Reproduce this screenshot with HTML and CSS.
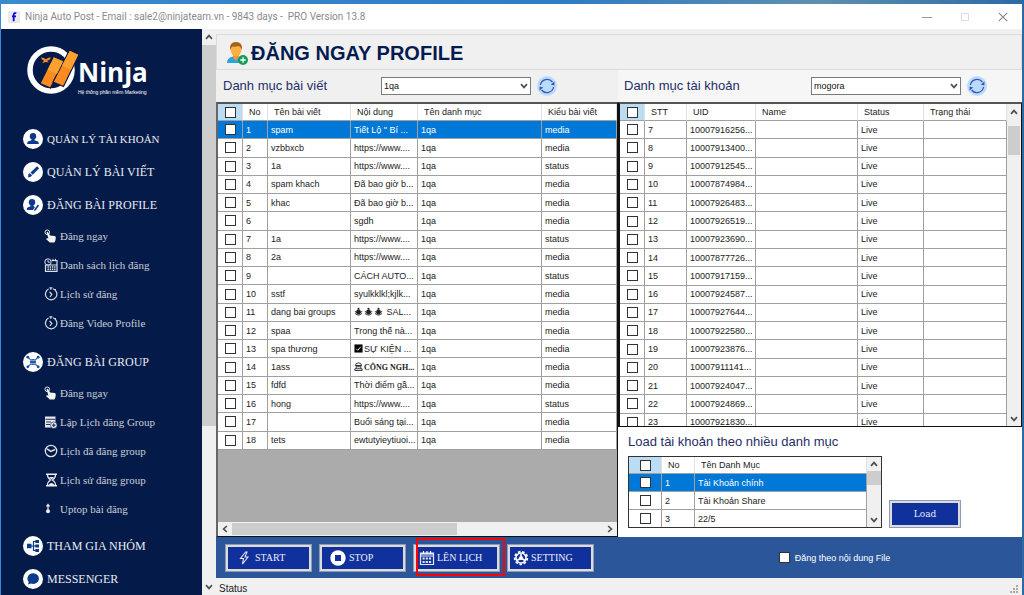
FILE: index.html
```html
<!DOCTYPE html>
<html lang="vi">
<head>
<meta charset="utf-8">
<title>Ninja Auto Post</title>
<link rel="stylesheet" href="styles.css">
</head>
<body>
<svg class="sprite" aria-hidden="true">
  <symbol id="up" viewBox="0 0 8 6"><path d="M1 4.8 4 1.6 7 4.8" fill="none" stroke="#505050" stroke-width="1.7"/></symbol>
  <symbol id="down" viewBox="0 0 8 6"><path d="M1 1.2 4 4.4 7 1.2" fill="none" stroke="#505050" stroke-width="1.7"/></symbol>
  <symbol id="left" viewBox="0 0 6 8"><path d="M4.8 1 1.6 4 4.8 7" fill="none" stroke="#505050" stroke-width="1.7"/></symbol>
  <symbol id="right" viewBox="0 0 6 8"><path d="M1.2 1 4.4 4 1.2 7" fill="none" stroke="#505050" stroke-width="1.7"/></symbol>
  <symbol id="refresh" viewBox="0 0 20 20"><circle cx="10" cy="10" r="10" fill="#b9dcfb"/><path d="M3.400 9A6.800 6.800 0 0 1 15.400 6M16.600 11A6.800 6.800 0 0 1 4.600 14" fill="none" stroke="#3f51b5" stroke-width="1.300"/><path d="M17.400 5.600v4l-3.600-1.200zM2.600 14.400v-4l3.600 1.200z" fill="#3f51b5"/></symbol>
  <symbol id="hand" viewBox="0 0 14 14"><circle cx="3.300" cy="3.300" r="2.300" fill="none" stroke="#e8e8ea" stroke-width="1"/><path d="M2.600 3.200q1-.9 1.700.2L6 6.400l4.600.7q1.200.3 1.200 1.600l-.4 2.800-1 2H5.800L2 9.900q.6-1.200 2.400-.3z" fill="#f2f2f2"/></symbol>
  <symbol id="timer" viewBox="0 0 14 14"><path d="M4.600 2A5.700 5.700 0 1 0 9 1.700M6.800.6v2.200M5.400.9h3M5.600 5l2.200 2.400-1.800 2.600" fill="none" stroke="#d8dbe2" stroke-width="1.200"/><path d="M11 2l1 1" stroke="#d8dbe2"/></symbol>
  <symbol id="bug" viewBox="0 0 10 10"><circle cx="5" cy="5.500" r="2.700" fill="#222"/><circle cx="5" cy="1.900" r="1.200" fill="#222"/><path d="M1 4.500q4 6 8 0M1 7q4 4 8 0" fill="none" stroke="#222"/></symbol>
</svg>
<div class="desktop">
<div class="window">
  <header class="titlebar">
    <svg class="appicon" viewBox="0 0 12 12"><rect width="12" height="12" rx="1" fill="#e9e9ee"/><path d="M8.300 2.200Q5.700 1.600 5.700 4v6.300M4 5.400h4" fill="none" stroke="#1707e0" stroke-width="1.800"/></svg>
    <span class="title">Ninja Auto Post - Email : sale2@ninjateam.vn - 9843 days -&nbsp; PRO Version 13.8</span>
    <button class="winbtn" aria-label="Minimize"><svg viewBox="0 0 10 10"><path d="M0 5.500h10" stroke="#999"/></svg></button>
    <button class="winbtn" aria-label="Maximize"><svg viewBox="0 0 10 10"><path d="M1.500 1.500h7v7h-7z" fill="none" stroke="#ddd"/></svg></button>
    <button class="winbtn" aria-label="Close"><svg viewBox="0 0 10 10"><path d="M.8.8l8.400 8.400M9.200.8.8 9.200" stroke="#8a8a8a" stroke-width="1.200"/></svg></button>
  </header>
  <div class="body">
    <nav class="sidebar">
      <div class="logo">
        <svg class="mark" viewBox="0 0 54 50"><circle cx="25" cy="25" r="21" fill="none" stroke="#fff" stroke-width="5.500"/><g stroke="#041b49" stroke-width="1.200"><path d="M27.500 11.500 38 16 24.500 43 14 38.500z" fill="#ff8a1f"/><path d="M43.500 5 53 9.500 37.500 41.500 27 37z" fill="#ff8a1f"/></g><path d="M27.800 12.400 37.100 16.400 31 29l-9.500-4zM43.800 5.900 52.100 9.800 45 24.500l-9-4z" fill="#ffa12e"/><path d="M15 12.500q3 0 5 1.700 2-2.200 5-1.700-1 3-4 3.300l2 1.700-3.500-.6-3.500 1.300 2-2.500q-2.500-1-3-3.200z" fill="#ff8a1f"/></svg>
        <div class="brand"><b>Ninja</b><small>Hệ thống phần mềm Marketing</small></div>
      </div>
      <a class="main tight" href="#"><svg viewBox="0 0 20 20"><circle cx="10" cy="10" r="10" fill="#fff"/><circle cx="10" cy="7.300" r="3.200" fill="#0c3a8c"/><path d="M8.500 9h3v2.300l3.500 1.200q.8.400.8 2.500H4.200q0-2.100.8-2.500l3.500-1.200z" fill="#0c3a8c"/></svg>QUẢN LÝ TÀI KHOẢN</a>
      <a class="main" href="#"><svg viewBox="0 0 20 20"><circle cx="10" cy="10" r="10" fill="#fff"/><path d="M14 4.200l2.200 2.100-6.500 6.400-2.200-2.200zM6.800 11.200 9 13.300q-.8 2-4.500 2 1.200-1 .8-2.500.2-1.300 1.500-1.600z" fill="#0c3a8c"/></svg>QUẢN LÝ BÀI VIẾT</a>
      <a class="main" href="#"><svg viewBox="0 0 20 20"><circle cx="10" cy="10" r="10" fill="#fff"/><circle cx="9" cy="7.300" r="3.200" fill="#0c3a8c"/><path d="M7.500 9h3v2.300l1.500.8-2 3H3.800q0-2.200.8-2.600l2.900-1.200zM14.800 9.600l1.300.9-3.300 4.800-1.700.7.300-1.700z" fill="#0c3a8c"/></svg>ĐĂNG BÀI PROFILE</a>
      <a class="sub" href="#"><svg><use href="#hand"/></svg>Đăng ngay</a>
      <a class="sub" href="#"><svg viewBox="0 0 14 14"><path d="M7.500 2.500H13v10.800H1.500V7M1.500 7H13" fill="none" stroke="#dcdfe6" stroke-width="1.200"/><circle cx="4" cy="4" r="3.200" fill="none" stroke="#dcdfe6"/><path d="M4 2.200v2h1.800M9 .8v2.500M11.500.8v2.500" fill="none" stroke="#dcdfe6"/><path d="M3.500 9h8M3.500 11.300h8" stroke="#dcdfe6" stroke-width="1.400" stroke-dasharray="1.400 .8"/></svg>Danh sách lịch đăng</a>
      <a class="sub" href="#"><svg><use href="#timer"/></svg>Lịch sử đăng</a>
      <a class="sub" href="#"><svg><use href="#timer"/></svg>Đăng Video Profile</a>
      <a class="main section" href="#"><svg viewBox="0 0 20 20"><circle cx="10" cy="10" r="10" fill="#fff"/><path d="M4.500 5l11 10M15.500 5l-11 10" stroke="#3e6cb2" stroke-width="1.100"/><circle cx="10" cy="10" r="3" fill="#2458a8"/><path d="M7 8.500h6M7 11.500h6" stroke="#a9c2e5" stroke-width=".7"/><g fill="#174a9c"><circle cx="4.800" cy="5.200" r="1.400"/><circle cx="15.200" cy="5.200" r="1.400"/><circle cx="4.800" cy="14.800" r="1.400"/><circle cx="15.200" cy="14.800" r="1.400"/></g></svg>ĐĂNG BÀI GROUP</a>
      <a class="sub" href="#"><svg><use href="#hand"/></svg>Đăng ngay</a>
      <a class="sub" href="#"><svg viewBox="0 0 14 14"><path d="M1 1.500h10.500V8H7v4.500H1z" fill="#e6e8ee"/><path d="M1.500 4.300h10M2 7h5M2 9.500h4" stroke="#041b49" stroke-width=".9"/><circle cx="9.800" cy="10.200" r="3.300" fill="#e6e8ee" stroke="#041b49" stroke-width=".6"/><path d="M9.800 8.500v3.400M8.100 10.200h3.400" stroke="#041b49"/></svg>Lập Lịch đăng Group</a>
      <a class="sub" href="#"><svg viewBox="0 0 14 14"><circle cx="7" cy="7" r="5.700" fill="none" stroke="#dfe1e8" stroke-width="1.300"/><path d="M3 4.800 6.800 7.400 11 5.500" fill="none" stroke="#dfe1e8" stroke-width="1.500"/></svg>Lịch đã đăng group</a>
      <a class="sub" href="#"><svg viewBox="0 0 14 14"><path d="M2 1.200h11M2 12.800h11" stroke="#eee" stroke-width="1.600"/><path d="M3.500 2q0 3 3 5-3 2-3 5M11.500 2q0 3-3 5 3 2 3 5" fill="none" stroke="#eee" stroke-width="1.200"/><path d="M5 4h5L7.500 6.500zM4.500 12q3-4 6 0z" fill="#eee"/></svg>Lịch sử đăng group</a>
      <a class="sub" href="#"><svg viewBox="0 0 14 14"><path d="M4 1.500l2.300 3H1.700zM3.400 4h1.200v4H3.400z" fill="#eee"/><circle cx="4" cy="9.200" r="2" fill="#eee"/></svg>Uptop bài đăng</a>
      <a class="main after" href="#"><svg viewBox="0 0 20 20"><circle cx="10" cy="10" r="10" fill="#fff"/><path d="M6 10h4.500M14 5.500h-3.500v9H14M10.500 10H14" fill="none" stroke="#0c3a8c" stroke-width="1.200"/><path d="M4 7.800h4.500v4.400H4zM12.300 3.900H16v3h-3.700zM12.300 8.500H16v3h-3.700zM12.300 13.100H16v3h-3.700z" fill="#0c3a8c"/></svg>THAM GIA NHÓM</a>
      <a class="main" href="#"><svg viewBox="0 0 20 20"><circle cx="10" cy="10" r="10" fill="#fff"/><path d="M10.200 4.300a5.800 5.300 0 1 1-2.200 10.200l-3 1 .7-2.600a5.600 5.300 0 0 1 4.500-8.600z" fill="#0c3a8c"/></svg>MESSENGER</a>
    </nav>
    <div class="vscroll side"><svg><use href="#up"/></svg><i class="thumb"></i><i class="rest"></i><svg><use href="#down"/></svg></div>
    <main class="content">
      <div class="heading">
        <svg viewBox="0 0 22 24"><path d="M1 22q0-5.500 6-6.500h6q6 1 6 6.500z" fill="#2ba3e0"/><path d="M7 14h6v3l-3 2.500L7 17z" fill="#e9963e"/><ellipse cx="10" cy="9" rx="5.300" ry="6.500" fill="#fbb040"/><path d="M4.300 9Q3 1 10 1t5.700 8q-1-3.500-3-4-4 1-6.500.500-1.200 1-1.900 3.500z" fill="#a4601f"/><circle cx="17" cy="19" r="5" fill="#169d58"/><path d="M17 16.300v5.400M14.300 19h5.400" stroke="#fff" stroke-width="1.300"/></svg>
        <h1>ĐĂNG NGAY PROFILE</h1>
      </div>
      <div class="panes">
        <section class="pane posts">
          <div class="filter">
            <label for="cat">Danh mục bài viết</label>
            <span class="combo"><select id="cat"><option>1qa</option></select><svg><use href="#down"/></svg></span>
            <button class="refresh" aria-label="Tải lại bài viết"><svg><use href="#refresh"/></svg></button>
          </div>
          <div class="grid">
            <div class="gridbody">
              <table class="list">
                <colgroup><col class="c25"><col class="c25"><col class="c83"><col class="c67"><col class="c124"><col></colgroup>
                <thead><tr><th class="sel"><input type="checkbox" aria-label="Chọn tất cả"><th>No<th>Tên bài viết<th>Nội dung<th>Tên danh mục<th>Kiểu bài viết</thead>
                <tbody>
                <tr class="active"><td><input type="checkbox" aria-label="1"><td>1<td>spam<td>Tiết Lộ " Bí ...<td>1qa<td>media
                <tr><td><input type="checkbox" aria-label="2"><td>2<td>vzbbxcb<td>https://www....<td>1qa<td>media
                <tr><td><input type="checkbox" aria-label="3"><td>3<td>1a<td>https://www....<td>1qa<td>status
                <tr><td><input type="checkbox" aria-label="4"><td>4<td>spam khach<td>Đã bao giờ b...<td>1qa<td>media
                <tr><td><input type="checkbox" aria-label="5"><td>5<td>khac<td>Đã bao giờ b...<td>1qa<td>media
                <tr><td><input type="checkbox" aria-label="6"><td>6<td><td>sgdh<td>1qa<td>media
                <tr><td><input type="checkbox" aria-label="7"><td>7<td>1a<td>https://www....<td>1qa<td>status
                <tr><td><input type="checkbox" aria-label="8"><td>8<td>2a<td>https://www....<td>1qa<td>media
                <tr><td><input type="checkbox" aria-label="9"><td>9<td><td>CÁCH AUTO...<td>1qa<td>status
                <tr><td><input type="checkbox" aria-label="10"><td>10<td>sstf<td>syulkklkl;kjlk...<td>1qa<td>media
                <tr><td><input type="checkbox" aria-label="11"><td>11<td>dang bai groups<td><svg class="glyph"><use href="#bug"/></svg><svg class="glyph"><use href="#bug"/></svg><svg class="glyph"><use href="#bug"/></svg> SAL...<td>1qa<td>media
                <tr><td><input type="checkbox" aria-label="12"><td>12<td>spaa<td>Trong thế nà...<td>1qa<td>media
                <tr><td><input type="checkbox" aria-label="13"><td>13<td>spa thương<td><svg class="glyph" viewBox="0 0 10 10"><path d="M.5.5h9v9h-9z" fill="#000"/><path d="M2.500 5.300l1.700 1.700L7.500 3" fill="none" stroke="#fff"/></svg>SỰ KIỆN ...<td>1qa<td>media
                <tr><td><input type="checkbox" aria-label="14"><td>14<td>1ass<td><svg class="glyph" viewBox="0 0 10 10"><path d="M1 9.500V7.500h8v2zM2.500 7V4h5v3M1.500 4q0-3 3.500-3t3.500 3z" fill="none" stroke="#222"/><path d="M3.500 5.300h3" stroke="#222"/></svg><b class="serif">CÔNG NGH...</b><td>1qa<td>media
                <tr><td><input type="checkbox" aria-label="15"><td>15<td>fdfd<td>Thời điểm gầ...<td>1qa<td>media
                <tr><td><input type="checkbox" aria-label="16"><td>16<td>hong<td>https://www....<td>1qa<td>status
                <tr><td><input type="checkbox" aria-label="17"><td>17<td><td>Buổi sáng tại...<td>1qa<td>media
                <tr><td><input type="checkbox" aria-label="18"><td>18<td>tets<td>ewtutyieytiuoi...<td>1qa<td>media
                </tbody>
              </table>
            </div>
            <div class="hscroll"><svg><use href="#left"/></svg><i class="thumb"></i><i class="rest"></i><svg><use href="#right"/></svg></div>
          </div>
        </section>
        <section class="pane accounts">
          <div class="filter light">
            <label for="acc">Danh mục tài khoản</label>
            <span class="combo"><select id="acc"><option>mogora</option></select><svg><use href="#down"/></svg></span>
            <button class="refresh" aria-label="Tải lại tài khoản"><svg><use href="#refresh"/></svg></button>
          </div>
          <div class="grid side-by">
            <div class="gridbody">
              <table class="list short">
                <colgroup><col class="c25"><col class="c42"><col class="c69"><col class="c102"><col class="c66"><col></colgroup>
                <thead><tr><th class="sel"><input type="checkbox" aria-label="Chọn tất cả tài khoản"><th>STT<th>UID<th>Name<th>Status<th>Trạng thái</thead>
                <tbody>
                <tr><td><input type="checkbox" aria-label="TK 7"><td>7<td>10007916256...<td><td>Live<td>
                <tr><td><input type="checkbox" aria-label="TK 8"><td>8<td>10007913400...<td><td>Live<td>
                <tr><td><input type="checkbox" aria-label="TK 9"><td>9<td>10007912545...<td><td>Live<td>
                <tr><td><input type="checkbox" aria-label="TK 10"><td>10<td>10007874984...<td><td>Live<td>
                <tr><td><input type="checkbox" aria-label="TK 11"><td>11<td>10007926483...<td><td>Live<td>
                <tr><td><input type="checkbox" aria-label="TK 12"><td>12<td>10007926519...<td><td>Live<td>
                <tr><td><input type="checkbox" aria-label="TK 13"><td>13<td>10007923690...<td><td>Live<td>
                <tr><td><input type="checkbox" aria-label="TK 14"><td>14<td>10007877726...<td><td>Live<td>
                <tr><td><input type="checkbox" aria-label="TK 15"><td>15<td>10007917159...<td><td>Live<td>
                <tr><td><input type="checkbox" aria-label="TK 16"><td>16<td>10007924587...<td><td>Live<td>
                <tr><td><input type="checkbox" aria-label="TK 17"><td>17<td>10007927644...<td><td>Live<td>
                <tr><td><input type="checkbox" aria-label="TK 18"><td>18<td>10007922580...<td><td>Live<td>
                <tr><td><input type="checkbox" aria-label="TK 19"><td>19<td>10007923876...<td><td>Live<td>
                <tr><td><input type="checkbox" aria-label="TK 20"><td>20<td>10007911141...<td><td>Live<td>
                <tr><td><input type="checkbox" aria-label="TK 21"><td>21<td>10007924047...<td><td>Live<td>
                <tr><td><input type="checkbox" aria-label="TK 22"><td>22<td>10007924869...<td><td>Live<td>
                <tr><td><input type="checkbox" aria-label="TK 23"><td>23<td>10007921830...<td><td>Live<td>
                </tbody>
              </table>
            </div>
            <div class="vscroll acc"><svg><use href="#up"/></svg><i class="thumb"></i><i class="rest"></i><svg><use href="#down"/></svg></div>
          </div>
          <div class="loader">
            <h2>Load tài khoản theo nhiều danh mục</h2>
            <div class="loadrow">
              <div class="mini">
                <table class="list natural">
                  <colgroup><col class="c33"><col class="c33"><col></colgroup>
                  <thead><tr><th class="sel"><input type="checkbox" aria-label="Chọn tất cả danh mục"><th>No<th>Tên Danh Mục</thead>
                  <tbody>
                  <tr class="active"><td><input type="checkbox" aria-label="DM 1"><td>1<td>Tài Khoản chính
                  <tr><td><input type="checkbox" aria-label="DM 2"><td>2<td>Tài Khoản Share
                  <tr><td><input type="checkbox" aria-label="DM 3"><td>3<td>22/5
                  </tbody>
                </table>
                <div class="vscroll cats"><svg><use href="#up"/></svg><i class="thumb"></i><i class="rest"></i><svg><use href="#down"/></svg></div>
              </div>
              <button class="action load">Load</button>
            </div>
          </div>
        </section>
      </div>
      <div class="toolbar">
        <button class="action wide"><svg viewBox="0 0 16 16"><path d="M9.500 2 4.500 8.500h3L6.500 14 12 7H9L11 2z" fill="none" stroke="#e6e8f4" stroke-width="1.100"/></svg>START</button>
        <button class="action wide"><svg viewBox="0 0 16 16"><circle cx="8" cy="8" r="7.700" fill="#fff"/><rect x="5" y="5" width="6" height="6" fill="#10309c"/></svg>STOP</button>
        <button class="action marked"><svg viewBox="0 0 16 16"><path d="M1.500 3h13v11.500h-13zM1.500 6h13" fill="none" stroke="#e6e8f4" stroke-width="1.200"/><path d="M2 3.800h12" stroke="#e6e8f4" stroke-width="1.600"/><path d="M4.500 1v3M8 1v3M11.500 1v3" stroke="#fff" stroke-width="1.200"/><path d="M3.500 8.500h9M3.500 12h9" stroke="#dfe2f2" stroke-width="2.200" stroke-dasharray="2.200 1"/></svg>LÊN LỊCH</button>
        <button class="action"><svg viewBox="0 0 16 16"><circle cx="8" cy="8" r="6.300" fill="none" stroke="#fff" stroke-width="1.800" stroke-dasharray="2.600 1.700"/><circle cx="8" cy="8" r="5" fill="none" stroke="#fff" stroke-width="1.500"/><path d="M8 4v4l-4 2.500M8 8l4 2.500" stroke="#fff" stroke-width="1.600" fill="none"/><circle cx="8" cy="8" r="2" fill="#fff"/></svg>SETTING</button>
        <label class="check"><input type="checkbox">Đăng theo nội dung File</label>
      </div>
      <footer class="status"><span>Status</span><svg viewBox="0 0 10 10" fill="#aaa"><path d="M7 1h2v2H7zM4 4h2v2H4zM7 4h2v2H7zM1 7h2v2H1zM4 7h2v2H4zM7 7h2v2H7z"/></svg></footer>
    </main>
  </div>
</div>
</div>
</body>
</html>
```
FILE: styles.css
```css
* { box-sizing: border-box; }
body { margin: 0; font-family: "Liberation Sans", Arial, sans-serif; font-size: 10px; line-height: 12px; color: #222; }
button, select, input { font: inherit; margin: 0; }
.sprite { position: absolute; width: 0; height: 0; }
.desktop { height: 100vh; padding: 4px 2px 0 1px; overflow: hidden; background: linear-gradient(90deg, #3a8ad0, #2f7cc4 55%, #5f8fae 80%, #2c6aa6); }
.window { height: 100%; display: flex; flex-direction: column; background: #f0f0f0; }

.titlebar { flex: none; height: 25px; display: flex; align-items: center; background: #fff; padding-left: 7px; }
.appicon { width: 12px; height: 12px; margin-right: 5px; }
.title { flex: 1; color: #8a8a8a; white-space: nowrap; font-family: Roboto, sans-serif; }
.winbtn { width: 38px; height: 25px; border: 0; padding: 0; background: none; display: grid; place-items: center; }
.winbtn svg { width: 10px; height: 10px; }

.body { flex: 1; min-height: 0; display: flex; }
.sidebar { flex: none; width: 201px; background: #041b49; overflow: hidden; font-family: "Liberation Serif", "Times New Roman", serif; }
.sidebar a { display: flex; align-items: center; color: #e8eaf0; text-decoration: none; white-space: nowrap; }
.logo { display: flex; height: 93px; padding: 16px 0 0 25px; }
.mark { width: 54px; height: 50px; }
.brand { display: flex; flex-direction: column; color: #fff; padding-top: 13px; margin-left: -2px; }
.brand b { font: bold 26px/28px "Open Sans", sans-serif; }
.brand small { margin-top: 2px; font: 5px/8px "Liberation Sans", sans-serif; white-space: nowrap; }
.main { height: 33px; padding-left: 22px; gap: 4px; font-size: 12px; }
.tight { font-size: 11px; }
.main svg { width: 20px; height: 20px; }
.section { margin-top: 8px; }
.after { margin-top: 6px; }
.sub { height: 29px; padding-left: 43px; gap: 2px; font-size: 11px; }
.sidebar .sub { color: #c9cdd8; }
.sub svg { width: 14px; height: 14px; }

.vscroll { flex: none; width: 14px; display: flex; flex-direction: column; align-items: center; background: #f0f0f0; }
.vscroll svg { width: 8px; height: 6px; margin: 5px 0; flex: none; }
.vscroll .thumb { width: 100%; background: #cdcdcd; }
.side .thumb { flex: 384; }
.side .rest { flex: 154; }
.acc svg { margin: 5px 0 11px; }
.acc svg:last-child { margin: 4px 0; }
.acc .thumb { flex: 29; width: 12px; }
.acc .rest { flex: 256; }
.cats svg { margin: 4px 0; }
.cats .thumb { flex: 1; }
.cats .rest { flex: 2; }
.hscroll { flex: none; height: 14px; display: flex; align-items: center; background: #f0f0f0; }
.hscroll svg { width: 6px; height: 8px; margin: 0 4px; flex: none; }
.hscroll .thumb { flex: 226; height: 12px; background: #cdcdcd; }
.hscroll .rest { flex: 146; }

.content { flex: 1; min-width: 0; display: flex; flex-direction: column; }
.heading { flex: none; height: 36px; margin-top: 5px; display: flex; align-items: center; gap: 3px; padding: 2px 0 0 9px; border: 1px solid #dcdcdc; }
.heading svg { width: 22px; height: 24px; }
h1 { margin: 0; font-size: 20px; line-height: 24px; color: #041b50; }
.panes { flex: 1; min-height: 0; display: grid; grid-template-columns: 402fr 404fr; }
.pane { min-width: 0; min-height: 0; display: flex; flex-direction: column; }
.filter { flex: none; height: 32px; display: flex; align-items: center; padding-left: 7px; }
.light { background: #f6f6f6; padding-left: 6px; }
.filter label { flex: none; width: 158px; font-size: 13px; line-height: 16px; color: #1f2f66; }
.light label { width: 187px; }
.combo { position: relative; width: 150px; height: 18px; }
.combo select { width: 100%; height: 100%; appearance: none; border: 1px solid #7a7a7a; border-radius: 0; background: #fff; padding: 0 2px; font-size: 9px; color: #111; }
.combo svg { position: absolute; right: 3px; top: 6px; width: 8px; height: 6px; pointer-events: none; }
.refresh { width: 20px; height: 20px; margin-left: 6px; padding: 0; border: 0; background: none; }
.refresh svg { width: 20px; height: 20px; display: block; }

.grid { flex: 1; min-height: 0; display: flex; flex-direction: column; border: 1px solid #222; border-width: 2px 1px 1px 2px; border-color: #555 #111 #111 #666; background: #ababab; }
.side-by { flex-direction: row; border-left-color: #111; }
.gridbody { flex: 1; min-height: 0; min-width: 0; overflow: hidden; }
.list { width: 100%; height: 346px; table-layout: fixed; border-collapse: separate; border-spacing: 0; background: #fff; font-size: 9px; line-height: 12px; }
.short { height: 328px; }
.natural { height: auto; }
.list th, .list td { padding: 0 0 0 3px; border-right: 1px solid #a0a0a0; border-bottom: 1px solid #a0a0a0; white-space: nowrap; overflow: hidden; text-align: left; font-weight: normal; }
.list th { height: 17px; padding-left: 6px; border-right-color: #e2e2e2; }
.list td { height: 18px; }
.list th:first-child, .list td:first-child { padding: 0; text-align: center; }
.list .sel { background: #bcdcf4; }
.list .active td { background: #0078d7; color: #fff; }
.c25 { width: 25px; }
.c33 { width: 33px; }
.c42 { width: 42px; }
.c66 { width: 66px; }
.c67 { width: 67px; }
.c69 { width: 69px; }
.c83 { width: 83px; }
.c102 { width: 102px; }
.c124 { width: 124px; }
input[type="checkbox"] { appearance: none; width: 11px; height: 11px; border: 1px solid #333; background: #fff; vertical-align: middle; }
.list input[type="checkbox"] { display: block; margin: 0 auto; }
.glyph { width: 9px; height: 9px; vertical-align: -1px; margin-right: 1px; }
.serif { font-family: "Liberation Serif", serif; font-size: 8px; }

.loader { flex: none; background: #fff; padding: 6px 9px 9px 10px; }
h2 { margin: 0 0 5px; font-size: 13px; line-height: 18px; font-weight: normal; color: #1f2f66; }
.loadrow { display: flex; align-items: flex-end; gap: 7px; }
.mini { width: 254px; height: 72px; display: flex; border: 1px solid #333; overflow: hidden; }
.mini .list { flex: 1; width: auto; min-width: 0; }

.toolbar { flex: none; height: 41px; display: flex; align-items: center; gap: 7px; padding-left: 9px; background: #2b579a; }
.action { width: 87px; height: 28px; display: flex; align-items: center; gap: 2px; padding: 0 3px; border: 3px solid #dcdcdc; background: #10309c; color: #eceef8; font-family: "Liberation Serif", serif; font-size: 10px; white-space: nowrap; outline: 1px solid #8f9bb5; outline-offset: -1px; }
.action svg { width: 16px; height: 16px; flex: none; }
.wide { gap: 3px; padding-left: 8px; }
.marked { position: relative; }
.marked::after { content: ""; position: absolute; inset: -9px -8px -7px 0; border: 2px solid #f00; }
.load { width: 72px; justify-content: center; font-family: "DejaVu Serif", serif; font-size: 9px; }
.check { display: flex; align-items: center; gap: 5px; margin: 0 auto; padding-left: 46px; color: #fff; font-size: 9px; }
.status { flex: none; height: 17px; display: flex; align-items: center; justify-content: space-between; padding: 4px 3px 0; }
.status svg { width: 10px; height: 10px; }
```
